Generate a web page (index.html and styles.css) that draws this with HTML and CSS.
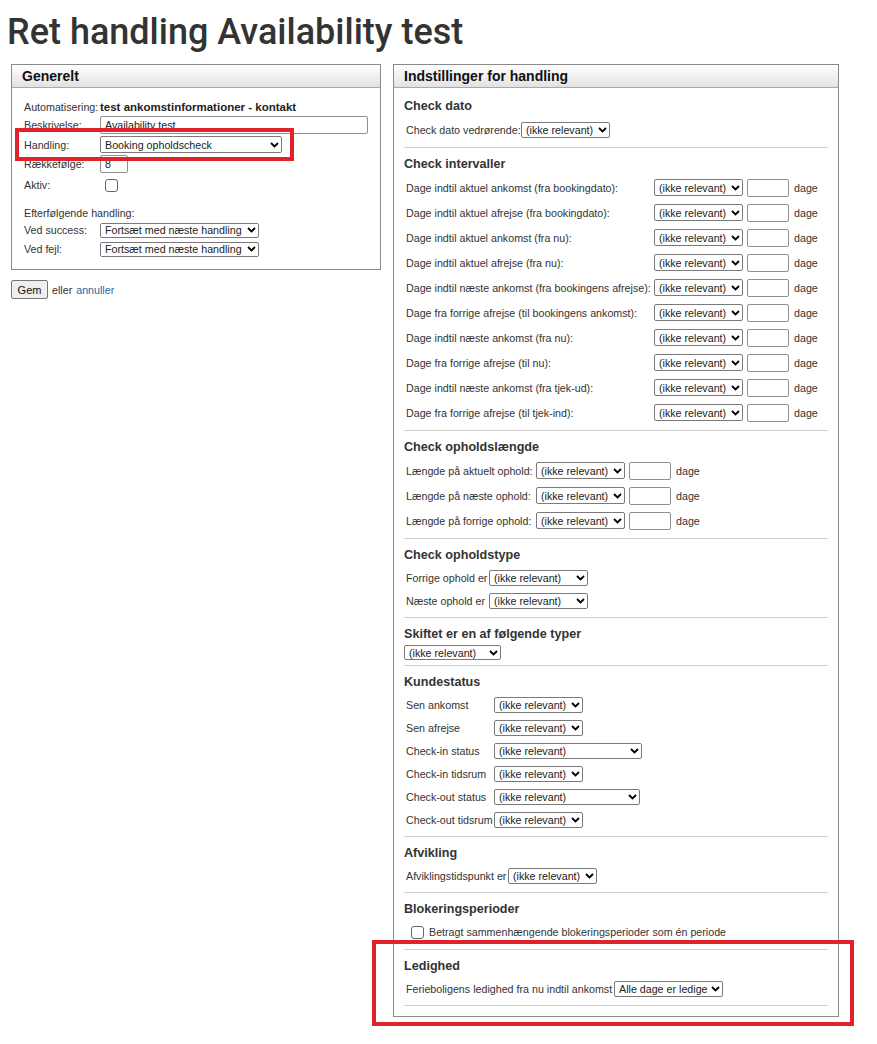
FILE: index.html
```html
<!DOCTYPE html>
<html lang="da">
<head>
<meta charset="utf-8">
<title>Ret handling Availability test</title>
<link rel="stylesheet" href="styles.css">
</head>
<body>
<div class="page">
  <h1>Ret handling Availability test</h1>
  <div class="cols">
    <div class="left">
      <div class="panel">
        <div class="panel-head">Generelt</div>
        <div class="left-body">
          <div class="frow h16"><span class="lbl">Automatisering:</span><b class="auto">test ankomstinformationer - kontakt</b></div>
          <div class="frow h20"><span class="lbl">Beskrivelse:</span><input class="txt wdesc" type="text" value="Availability test"></div>
          <div class="frow h19"><span class="lbl">Handling:</span><span class="sel w182 s17"><select><option>Booking opholdscheck</option></select><svg width="9" height="6" viewBox="0 0 9 6"><path d="M1 1L4.5 4.5L8 1" fill="none" stroke="#000" stroke-width="1.8"/></svg></span></div>
          <div class="frow h20"><span class="lbl">Rækkefølge:</span><input class="txt wnum" type="text" value="8"></div>
          <div class="frow h22"><span class="lbl">Aktiv:</span><input class="chk chk-left" type="checkbox"></div>
          <div class="frow h15 gap9"><span>Efterfølgende handling:</span></div>
          <div class="frow h20"><span class="lbl">Ved success:</span><span class="sel w159 s15"><select><option>Fortsæt med næste handling</option></select><svg width="9" height="6" viewBox="0 0 9 6"><path d="M1 1L4.5 4.5L8 1" fill="none" stroke="#000" stroke-width="1.8"/></svg></span></div>
          <div class="frow h18"><span class="lbl">Ved fejl:</span><span class="sel w159 s15"><select><option>Fortsæt med næste handling</option></select><svg width="9" height="6" viewBox="0 0 9 6"><path d="M1 1L4.5 4.5L8 1" fill="none" stroke="#000" stroke-width="1.8"/></svg></span></div>
        </div>
      </div>
      <div class="actions"><button class="btn" type="button">Gem</button><span>eller</span><a href="#" class="link">annuller</a></div>
    </div>

    <div class="panel right">
      <div class="panel-head">Indstillinger for handling</div>
      <div class="right-body">
        <div class="sec">
          <h3>Check dato</h3>
          <div class="grid r25 g-dato">
            <span>Check dato vedrørende:</span><span class="sel w89 s16"><select><option>(ikke relevant)</option></select><svg width="9" height="6" viewBox="0 0 9 6"><path d="M1 1L4.5 4.5L8 1" fill="none" stroke="#000" stroke-width="1.8"/></svg></span>
          </div>
        </div>

        <div class="sec">
          <h3>Check intervaller</h3>
          <div class="grid r25 g-int">
            <span>Dage indtil aktuel ankomst (fra bookingdato):</span><span class="sel w89 s17"><select><option>(ikke relevant)</option></select><svg width="9" height="6" viewBox="0 0 9 6"><path d="M1 1L4.5 4.5L8 1" fill="none" stroke="#000" stroke-width="1.8"/></svg></span><input class="txt num" type="text"><span>dage</span>
            <span>Dage indtil aktuel afrejse (fra bookingdato):</span><span class="sel w89 s17"><select><option>(ikke relevant)</option></select><svg width="9" height="6" viewBox="0 0 9 6"><path d="M1 1L4.5 4.5L8 1" fill="none" stroke="#000" stroke-width="1.8"/></svg></span><input class="txt num" type="text"><span>dage</span>
            <span>Dage indtil aktuel ankomst (fra nu):</span><span class="sel w89 s17"><select><option>(ikke relevant)</option></select><svg width="9" height="6" viewBox="0 0 9 6"><path d="M1 1L4.5 4.5L8 1" fill="none" stroke="#000" stroke-width="1.8"/></svg></span><input class="txt num" type="text"><span>dage</span>
            <span>Dage indtil aktuel afrejse (fra nu):</span><span class="sel w89 s17"><select><option>(ikke relevant)</option></select><svg width="9" height="6" viewBox="0 0 9 6"><path d="M1 1L4.5 4.5L8 1" fill="none" stroke="#000" stroke-width="1.8"/></svg></span><input class="txt num" type="text"><span>dage</span>
            <span>Dage indtil næste ankomst (fra bookingens afrejse):</span><span class="sel w89 s17"><select><option>(ikke relevant)</option></select><svg width="9" height="6" viewBox="0 0 9 6"><path d="M1 1L4.5 4.5L8 1" fill="none" stroke="#000" stroke-width="1.8"/></svg></span><input class="txt num" type="text"><span>dage</span>
            <span>Dage fra forrige afrejse (til bookingens ankomst):</span><span class="sel w89 s17"><select><option>(ikke relevant)</option></select><svg width="9" height="6" viewBox="0 0 9 6"><path d="M1 1L4.5 4.5L8 1" fill="none" stroke="#000" stroke-width="1.8"/></svg></span><input class="txt num" type="text"><span>dage</span>
            <span>Dage indtil næste ankomst (fra nu):</span><span class="sel w89 s17"><select><option>(ikke relevant)</option></select><svg width="9" height="6" viewBox="0 0 9 6"><path d="M1 1L4.5 4.5L8 1" fill="none" stroke="#000" stroke-width="1.8"/></svg></span><input class="txt num" type="text"><span>dage</span>
            <span>Dage fra forrige afrejse (til nu):</span><span class="sel w89 s17"><select><option>(ikke relevant)</option></select><svg width="9" height="6" viewBox="0 0 9 6"><path d="M1 1L4.5 4.5L8 1" fill="none" stroke="#000" stroke-width="1.8"/></svg></span><input class="txt num" type="text"><span>dage</span>
            <span>Dage indtil næste ankomst (fra tjek-ud):</span><span class="sel w89 s17"><select><option>(ikke relevant)</option></select><svg width="9" height="6" viewBox="0 0 9 6"><path d="M1 1L4.5 4.5L8 1" fill="none" stroke="#000" stroke-width="1.8"/></svg></span><input class="txt num" type="text"><span>dage</span>
            <span>Dage fra forrige afrejse (til tjek-ind):</span><span class="sel w89 s17"><select><option>(ikke relevant)</option></select><svg width="9" height="6" viewBox="0 0 9 6"><path d="M1 1L4.5 4.5L8 1" fill="none" stroke="#000" stroke-width="1.8"/></svg></span><input class="txt num" type="text"><span>dage</span>
          </div>
        </div>

        <div class="sec">
          <h3>Check opholdslængde</h3>
          <div class="grid r25 g-len">
            <span>Længde på aktuelt ophold:</span><span class="sel w89 s17"><select><option>(ikke relevant)</option></select><svg width="9" height="6" viewBox="0 0 9 6"><path d="M1 1L4.5 4.5L8 1" fill="none" stroke="#000" stroke-width="1.8"/></svg></span><input class="txt num" type="text"><span>dage</span>
            <span>Længde på næste ophold:</span><span class="sel w89 s17"><select><option>(ikke relevant)</option></select><svg width="9" height="6" viewBox="0 0 9 6"><path d="M1 1L4.5 4.5L8 1" fill="none" stroke="#000" stroke-width="1.8"/></svg></span><input class="txt num" type="text"><span>dage</span>
            <span>Længde på forrige ophold:</span><span class="sel w89 s17"><select><option>(ikke relevant)</option></select><svg width="9" height="6" viewBox="0 0 9 6"><path d="M1 1L4.5 4.5L8 1" fill="none" stroke="#000" stroke-width="1.8"/></svg></span><input class="txt num" type="text"><span>dage</span>
          </div>
        </div>

        <div class="sec">
          <h3>Check opholdstype</h3>
          <div class="grid r23 g-type">
            <span>Forrige ophold er</span><span class="sel w99 s16"><select><option>(ikke relevant)</option></select><svg width="9" height="6" viewBox="0 0 9 6"><path d="M1 1L4.5 4.5L8 1" fill="none" stroke="#000" stroke-width="1.8"/></svg></span>
            <span>Næste ophold er</span><span class="sel w99 s16"><select><option>(ikke relevant)</option></select><svg width="9" height="6" viewBox="0 0 9 6"><path d="M1 1L4.5 4.5L8 1" fill="none" stroke="#000" stroke-width="1.8"/></svg></span>
          </div>
        </div>

        <div class="sec">
          <h3>Skiftet er en af følgende typer</h3>
          <div class="solo"><span class="sel w97 s15"><select><option>(ikke relevant)</option></select><svg width="9" height="6" viewBox="0 0 9 6"><path d="M1 1L4.5 4.5L8 1" fill="none" stroke="#000" stroke-width="1.8"/></svg></span></div>
        </div>

        <div class="sec">
          <h3>Kundestatus</h3>
          <div class="grid r23 g-kunde">
            <span>Sen ankomst</span><span class="sel w89 s16"><select><option>(ikke relevant)</option></select><svg width="9" height="6" viewBox="0 0 9 6"><path d="M1 1L4.5 4.5L8 1" fill="none" stroke="#000" stroke-width="1.8"/></svg></span>
            <span>Sen afrejse</span><span class="sel w89 s16"><select><option>(ikke relevant)</option></select><svg width="9" height="6" viewBox="0 0 9 6"><path d="M1 1L4.5 4.5L8 1" fill="none" stroke="#000" stroke-width="1.8"/></svg></span>
            <span>Check-in status</span><span class="sel w148 s16"><select><option>(ikke relevant)</option></select><svg width="9" height="6" viewBox="0 0 9 6"><path d="M1 1L4.5 4.5L8 1" fill="none" stroke="#000" stroke-width="1.8"/></svg></span>
            <span>Check-in tidsrum</span><span class="sel w89 s16"><select><option>(ikke relevant)</option></select><svg width="9" height="6" viewBox="0 0 9 6"><path d="M1 1L4.5 4.5L8 1" fill="none" stroke="#000" stroke-width="1.8"/></svg></span>
            <span>Check-out status</span><span class="sel w146 s16"><select><option>(ikke relevant)</option></select><svg width="9" height="6" viewBox="0 0 9 6"><path d="M1 1L4.5 4.5L8 1" fill="none" stroke="#000" stroke-width="1.8"/></svg></span>
            <span>Check-out tidsrum</span><span class="sel w89 s16"><select><option>(ikke relevant)</option></select><svg width="9" height="6" viewBox="0 0 9 6"><path d="M1 1L4.5 4.5L8 1" fill="none" stroke="#000" stroke-width="1.8"/></svg></span>
          </div>
        </div>

        <div class="sec">
          <h3>Afvikling</h3>
          <div class="grid r23 g-afv">
            <span>Afviklingstidspunkt er</span><span class="sel w89 s16"><select><option>(ikke relevant)</option></select><svg width="9" height="6" viewBox="0 0 9 6"><path d="M1 1L4.5 4.5L8 1" fill="none" stroke="#000" stroke-width="1.8"/></svg></span>
          </div>
        </div>

        <div class="sec">
          <h3>Blokeringsperioder</h3>
          <label class="chkrow"><input class="chk" type="checkbox"><span>Betragt sammenhængende blokeringsperioder som én periode</span></label>
        </div>

        <div class="sec">
          <h3>Ledighed</h3>
          <div class="grid r23 g-led">
            <span>Ferieboligens ledighed fra nu indtil ankomst</span><span class="sel w109 s16"><select><option>Alle dage er ledige</option></select><svg width="9" height="6" viewBox="0 0 9 6"><path d="M1 1L4.5 4.5L8 1" fill="none" stroke="#000" stroke-width="1.8"/></svg></span>
          </div>
        </div>
      </div>
    </div>
  </div>

  <div class="mark mark-handling"></div>
  <div class="mark mark-ledighed"></div>
</div>
</body>
</html>
```

FILE: styles.css
```css
* { box-sizing: border-box; }

html, body { height: 100%; }

body {
  margin: 0;
  background: #fff;
  color: #333;
  font-family: "Liberation Sans", Arial, sans-serif;
  font-size: 10.7px;
}

.page {
  position: relative;
  min-height: 1044px;
  padding: 11px 0 0 11px;
}

h1 {
  margin: 0 0 11px -4px;
  font-family: Roboto, "Liberation Sans", sans-serif;
  font-weight: 500;
  font-size: 36px;
  line-height: 42px;
  color: #333;
}

.cols {
  display: flex;
  gap: 12px;
  align-items: flex-start;
}

.left { width: 370px; }

.panel {
  border: 1px solid #8a8a8a;
  background: #fff;
}

.panel-head {
  height: 23px;
  padding: 0 10px;
  border-bottom: 1px solid #a9a9a9;
  background: linear-gradient(#ffffff, #e2e2e2);
  font-weight: bold;
  font-size: 14px;
  line-height: 22px;
  color: #111;
}

/* left form */
.left-body { padding: 11px 12px; }

.frow {
  display: flex;
  align-items: center;
  white-space: nowrap;
}
.frow .lbl { width: 76px; flex: none; }
.h15 { height: 15px; }
.h16 { height: 16px; }
.h18 { height: 18px; }
.h19 { height: 19px; }
.h20 { height: 20px; }
.h22 { height: 22px; }
.gap9 { margin-top: 9px; }

.auto {
  font-size: 11.5px;
  color: #222;
}

.txt {
  height: 18px;
  margin: 0;
  padding: 0 4px;
  border: 1px solid #8f8f8f;
  border-radius: 2px;
  background: #fff;
  font: inherit;
  color: #222;
}
.wdesc { width: 268px; }
.wnum { width: 28px; }
.num { width: 42px; }

.chk {
  appearance: none;
  -webkit-appearance: none;
  width: 13px;
  height: 13px;
  margin: 0;
  border: 1px solid #666;
  border-radius: 3px;
  background: #fff;
  flex: none;
}
.chk-left { margin-left: 5px; }

/* select look-alike */
.sel {
  position: relative;
  display: inline-flex;
  vertical-align: middle;
}
.sel select {
  appearance: none;
  -webkit-appearance: none;
  width: 100%;
  height: 100%;
  margin: 0;
  padding: 0 14px 0 4px;
  border: 1px solid #7a7a7a;
  border-radius: 2px;
  background: #fff;
  font: inherit;
  color: #222;
}
.sel svg {
  position: absolute;
  right: 3px;
  top: 50%;
  margin-top: -3px;
  pointer-events: none;
}
.s15 { height: 15px; }
.s16 { height: 16px; }
.s17 { height: 17px; }
.w89 { width: 89px; }
.w97 { width: 97px; }
.w99 { width: 99px; }
.w109 { width: 109px; }
.w146 { width: 146px; }
.w148 { width: 148px; }
.w159 { width: 159px; }
.w182 { width: 182px; }

.actions {
  display: flex;
  align-items: center;
  gap: 4px;
  margin-top: 10px;
}
.btn {
  width: 37px;
  height: 19px;
  padding: 0;
  border: 1px solid #767676;
  border-radius: 2px;
  background: #efefef;
  font: inherit;
  font-size: 11px;
  color: #111;
}
.link {
  color: #2468a8;
  text-decoration: none;
}

/* right panel */
.right { width: 446px; }
.right-body { padding: 2px 10px 10px; }

.sec {
  padding: 8px 0 5px;
  border-bottom: 1px solid #cfcfcf;
}
.sec h3 {
  margin: 0 0 3px;
  font-size: 12.6px;
  line-height: 16px;
  font-weight: bold;
  color: #333;
}

.grid {
  display: grid;
  align-items: center;
  padding-left: 2px;
  white-space: nowrap;
}
.r25 { grid-auto-rows: 25px; }
.r23 { grid-auto-rows: 23px; }

.g-dato { grid-template-columns: 115px auto; }
.g-int { grid-template-columns: 248px 93px 47px auto; }
.g-len { grid-template-columns: 130px 93px 47px auto; }
.g-type { grid-template-columns: 83px auto; }
.g-kunde { grid-template-columns: 88px auto; }
.g-afv { grid-template-columns: 102px auto; }
.g-led { grid-template-columns: 208px auto; }

.solo { display: flex; height: 15px; }

.chkrow {
  display: flex;
  align-items: center;
  gap: 5px;
  height: 24px;
  padding-left: 7px;
  white-space: nowrap;
}

/* annotation overlays */
.mark {
  position: absolute;
  border: 4px solid #e0232b;
  pointer-events: none;
}
.mark-handling {
  left: 15px;
  top: 128px;
  width: 279px;
  height: 33px;
}
.mark-ledighed {
  left: 372px;
  top: 940px;
  width: 482px;
  height: 86px;
}
```
